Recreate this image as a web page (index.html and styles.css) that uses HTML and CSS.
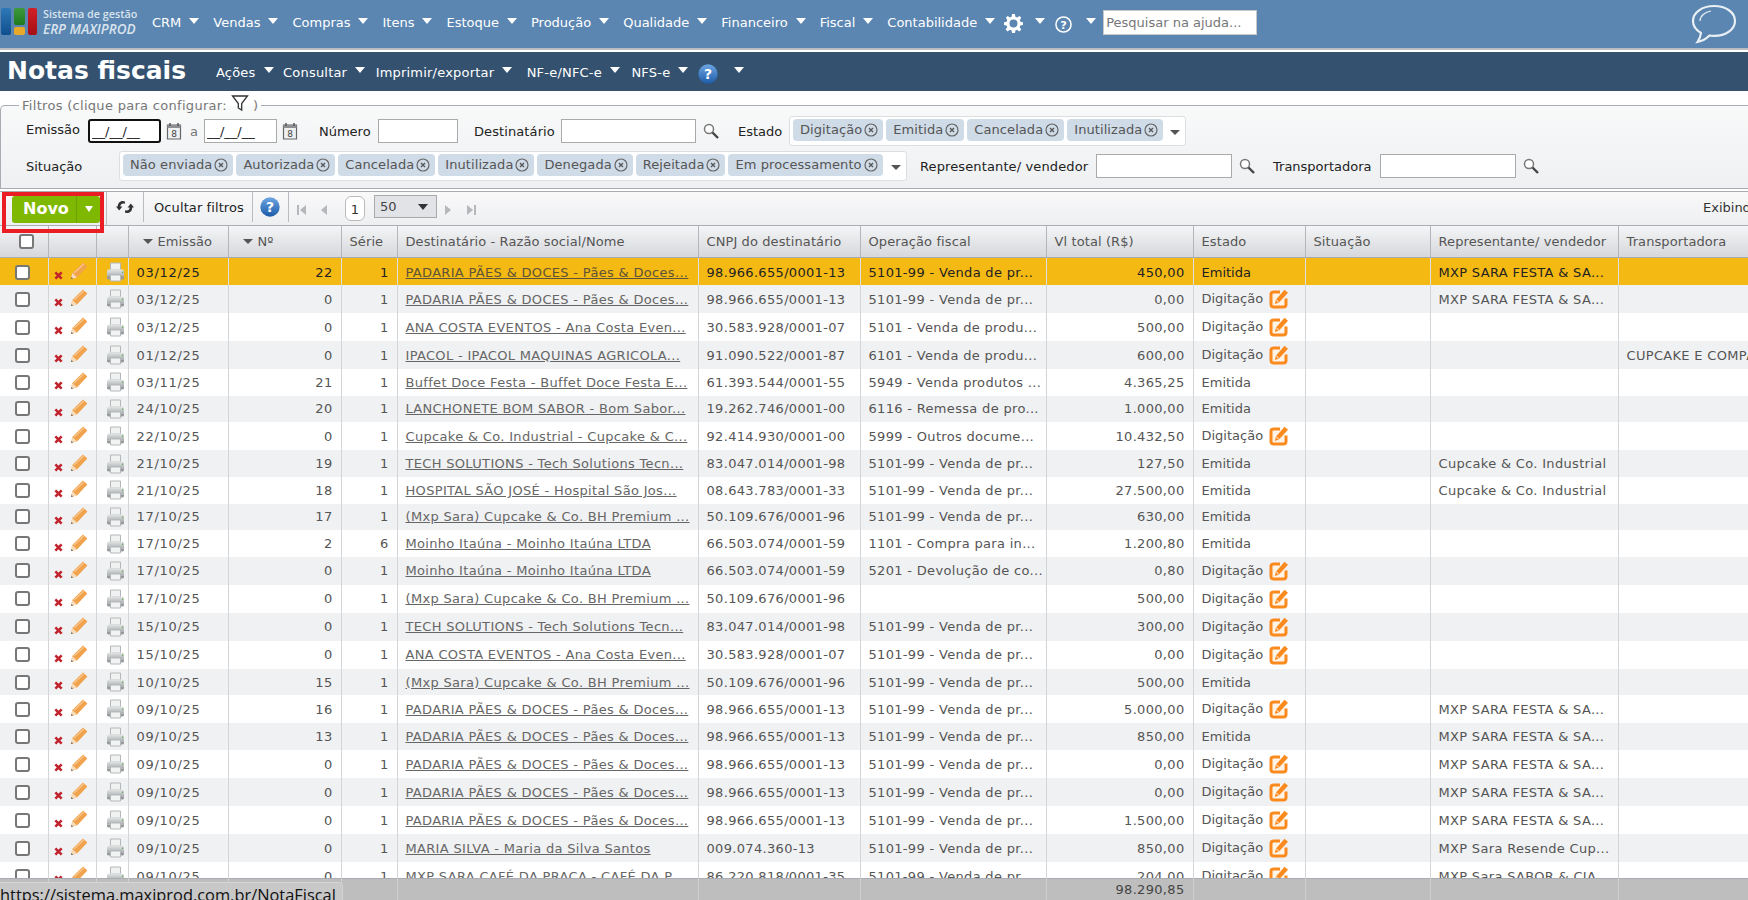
FILE: index.html
```html
<!DOCTYPE html>
<html lang="pt-BR">
<head>
<meta charset="utf-8">
<title>Notas fiscais</title>
<link rel="stylesheet" href="styles.css">
</head>
<body>
<svg class="sprite" aria-hidden="true">
  <defs>
    <linearGradient id="bluegrad" x1="0" y1="0" x2="0" y2="1"><stop offset="0" stop-color="#6ea6e2"/><stop offset="1" stop-color="#1c5ba8"/></linearGradient>
    <linearGradient id="prgrad" x1="0" y1="0" x2="0" y2="1"><stop offset="0" stop-color="#e4e6e7"/><stop offset="1" stop-color="#a9adae"/></linearGradient>
  </defs>
  <symbol id="i-x" viewBox="0 0 10 10"><path d="M1.500 1.500 8.500 8.500M8.500 1.500 1.500 8.500" stroke="#c0232c" stroke-width="2.800" fill="none"/></symbol>
  <symbol id="i-pencil" viewBox="0 0 18 18"><path d="M1 17 2.300 11 13 .6 17.400 4.400 7 15.500Z" fill="#f0a24d"/><path d="M2.300 11 7 15.500 1 17Z" fill="#f6dcb8"/><path d="M1 17 1.600 15 3 16.400Z" fill="#555"/><path d="M4 11 14 1.800" stroke="#f9c78c" stroke-width="1.200"/></symbol>
  <symbol id="i-print" viewBox="0 0 19 20"><path d="M4.500 1h10v7h-10z" fill="#f0f1f1" stroke="#b4b7b9"/><path d="M1 9.500Q1 7.500 3 7.500h13q2 0 2 2v5H1Z" fill="url(#prgrad)"/><path d="M1 14.500h17v1.500q0 1.500-2 1.500H3q-2 0-2-1.500Z" fill="#96999b"/><path d="M4.500 13h10v6h-10z" fill="#f2f3f3" stroke="#b4b7b9"/><path d="M16 9.500h1.200v1.500H16z" fill="#62b357"/></symbol>
  <symbol id="i-edit" viewBox="0 0 20 20"><path d="M11 3H4.500Q2 3 2 5.500v10Q2 18 4.500 18h10q2.500 0 2.500-2.500V9.500" fill="#fff4e6" stroke="#fb8a1e" stroke-width="3"/><path d="M15.500 .8 19 3.800 10 13.500 5.800 15 7 10.500Z" fill="#fb8a1e"/><path d="M7 10.500 10 13.500" stroke="#fff" stroke-width="1"/></symbol>
  <symbol id="i-close" viewBox="0 0 14 14"><circle cx="7" cy="7" r="6" fill="none" stroke="#666" stroke-width="1.200"/><path d="M5 5 9 9M9 5 5 9" stroke="#555" stroke-width="1.300"/></symbol>
  <symbol id="i-search" viewBox="0 0 16 16"><circle cx="6" cy="6" r="4.500" fill="#fff" stroke="#777" stroke-width="1.500"/><path d="M9.500 9.500 15 15" stroke="#444" stroke-width="2.400"/></symbol>
</svg>

<header class="topbar">
  <div class="logo">
    <div class="logo-bars">
      <span class="bar bar-blue"></span>
      <span class="bar-mid"><span class="bar bar-green"></span><span class="bar bar-yellow"></span></span>
      <span class="bar bar-red"></span>
    </div>
    <div class="logo-text">
      <span class="logo-top">Sistema de gestão</span>
      <span class="logo-erp">ERP MAXIPROD</span>
    </div>
  </div>
  <nav class="mainnav">
    <a class="item">CRM<i class="caret"></i></a>
    <a class="item">Vendas<i class="caret"></i></a>
    <a class="item">Compras<i class="caret"></i></a>
    <a class="item">Itens<i class="caret"></i></a>
    <a class="item">Estoque<i class="caret"></i></a>
    <a class="item">Produção<i class="caret"></i></a>
    <a class="item">Qualidade<i class="caret"></i></a>
    <a class="item">Financeiro<i class="caret"></i></a>
    <a class="item">Fiscal<i class="caret"></i></a>
    <a class="item">Contabilidade<i class="caret"></i></a>
  </nav>
  <svg class="gear" viewBox="0 0 20 20"><path fill="#fff" fill-rule="evenodd" d="M8.500 0h3l.5 2.800 1.800.8L16.200 2l2 2-1.600 2.400.8 1.800 2.600.5v3l-2.800.5-.7 1.700 1.700 2.400-2.100 2.100-2.400-1.700-1.700.7-.5 2.800h-3l-.5-2.800-1.800-.7L3.800 18.400 1.700 16.300l1.700-2.400-.7-1.700L0 11.700v-3l2.700-.5.8-1.800L1.900 4l2-2 2.400 1.600 1.700-.8ZM10 5.800a4.200 4.200 0 1 0 0 8.400 4.200 4.200 0 0 0 0-8.400Z"/></svg>
  <i class="caret caret-gear"></i>
  <svg class="qmark" viewBox="0 0 18 18"><circle cx="9" cy="9" r="8" fill="none" stroke="#fff" stroke-width="1.600"/><text x="9" y="13.500" text-anchor="middle" class="qtxt">?</text></svg>
  <i class="caret caret-help"></i>
  <input class="helpsearch" type="text" placeholder="Pesquisar na ajuda...">
  <svg class="chat" viewBox="0 0 46 40"><path d="M23 2C11 2 2 8.500 2 17c0 5 3 9 8 12-.3 3-1.500 6-3.500 9 5-1 9-3.500 12-6.500 1.500.3 3 .4 4.500.4 12 0 21-6.500 21-15S35 2 23 2Z" fill="none" stroke="#e9eff5" stroke-width="2.200"/><path d="M9 17c0-5 5-9 11-10" fill="none" stroke="#e9eff5" stroke-width="1.200"/></svg>
</header>

<section class="pagebar">
  <h1 class="title">Notas fiscais</h1>
  <nav class="subnav">
    <a class="item">Ações<i class="caret"></i></a>
    <a class="item">Consultar<i class="caret"></i></a>
    <a class="item">Imprimir/exportar<i class="caret"></i></a>
    <a class="item">NF-e/NFC-e<i class="caret"></i></a>
    <a class="item">NFS-e<i class="caret"></i></a>
  </nav>
  <svg class="ico-help-sub" viewBox="0 0 20 20"><circle cx="10" cy="10" r="9.700" fill="url(#bluegrad)"/><text x="10" y="15.200" text-anchor="middle" class="helptxt">?</text></svg>
  <i class="caret caret-sub"></i>
</section>

<fieldset class="filters">
  <legend class="legend">Filtros (clique para configurar: <svg class="funnel" viewBox="0 0 18 18"><path d="M1.500 2h15L10.700 9.500V16L7.300 14V9.500Z" fill="none" stroke="#333" stroke-width="1.300"/></svg> )</legend>
  <div class="frow frow-1">
    <label class="lab lab-emissao">Emissão</label>
    <input class="date date-focus" type="text" value="__/__/__">
    <svg class="ico-cal" viewBox="0 0 16 18"><path d="M1.500 3h13v14h-13z" fill="#eef0f1" stroke="#666" stroke-width="1.200"/><path d="M1.500 3h13v3h-13z" fill="#8c9094"/><path d="M4 1v3M12 1v3" stroke="#555" stroke-width="1.500"/><text x="8" y="15" text-anchor="middle" class="caltxt">8</text></svg>
    <span class="lab-a">a</span>
    <input class="date" type="text" value="__/__/__">
    <svg class="ico-cal" viewBox="0 0 16 18"><path d="M1.500 3h13v14h-13z" fill="#eef0f1" stroke="#666" stroke-width="1.200"/><path d="M1.500 3h13v3h-13z" fill="#8c9094"/><path d="M4 1v3M12 1v3" stroke="#555" stroke-width="1.500"/><text x="8" y="15" text-anchor="middle" class="caltxt">8</text></svg>
    <label class="lab lab-numero">Número</label>
    <input class="field field-num" type="text">
    <label class="lab lab-dest">Destinatário</label>
    <input class="field field-dest" type="text">
    <svg class="ico-search"><use href="#i-search"/></svg>
    <label class="lab lab-estado">Estado</label>
    <div class="multi multi-estado">
      <span class="tag">Digitação<svg class="tagx"><use href="#i-close"/></svg></span>
      <span class="tag">Emitida<svg class="tagx"><use href="#i-close"/></svg></span>
      <span class="tag">Cancelada<svg class="tagx"><use href="#i-close"/></svg></span>
      <span class="tag">Inutilizada<svg class="tagx"><use href="#i-close"/></svg></span>
      <i class="dcaret"></i>
    </div>
  </div>
  <div class="frow frow-2">
    <label class="lab lab-sit">Situação</label>
    <div class="multi multi-sit">
      <span class="tag">Não enviada<svg class="tagx"><use href="#i-close"/></svg></span>
      <span class="tag">Autorizada<svg class="tagx"><use href="#i-close"/></svg></span>
      <span class="tag">Cancelada<svg class="tagx"><use href="#i-close"/></svg></span>
      <span class="tag">Inutilizada<svg class="tagx"><use href="#i-close"/></svg></span>
      <span class="tag">Denegada<svg class="tagx"><use href="#i-close"/></svg></span>
      <span class="tag">Rejeitada<svg class="tagx"><use href="#i-close"/></svg></span>
      <span class="tag">Em processamento<svg class="tagx"><use href="#i-close"/></svg></span>
      <i class="dcaret"></i>
    </div>
    <label class="lab lab-rep">Representante/ vendedor</label>
    <input class="field field-rep" type="text">
    <svg class="ico-search"><use href="#i-search"/></svg>
    <label class="lab lab-tra">Transportadora</label>
    <input class="field field-rep" type="text">
    <svg class="ico-search"><use href="#i-search"/></svg>
  </div>
</fieldset>

<div class="toolbar">
  <div class="novo-wrap">
    <button class="novo"><span class="novo-label">Novo</span><span class="novo-arrow"></span></button>
  </div>
  <div class="tb-cell tb-refresh">
    <svg class="ico-refresh" viewBox="0 0 18 16"><path d="M9 2.500C5 .8 1.800 3.500 1.800 7.500H0l3.200 4 3.200-4H4.400C4.400 5 6.500 3.800 9 4.800ZM9 13.500c4 1.700 7.200-1 7.200-5H18l-3.200-4-3.200 4h2c0 2.500-2.100 3.700-4.600 2.700Z" fill="#333"/></svg>
  </div>
  <div class="tb-cell tb-hide">Ocultar filtros</div>
  <div class="tb-cell tb-help"><svg class="ico-help" viewBox="0 0 20 20"><circle cx="10" cy="10" r="9.700" fill="url(#bluegrad)"/><text x="10" y="15.200" text-anchor="middle" class="helptxt">?</text></svg></div>
  <div class="pager">
    <svg class="pg pg-first" viewBox="0 0 9 12"><path d="M0 1h2v10H0ZM9 1v10L3 6Z" fill="#b4b8bb"/></svg>
    <svg class="pg pg-prev" viewBox="0 0 6 12"><path d="M6 1v10L0 6Z" fill="#b4b8bb"/></svg>
    <span class="pagebox">1</span>
    <span class="pagesel">50<i class="dcaret dcaret-big"></i></span>
    <svg class="pg pg-next" viewBox="0 0 6 12"><path d="M0 1v10l6-5Z" fill="#b4b8bb"/></svg>
    <svg class="pg pg-last" viewBox="0 0 9 12"><path d="M0 1v10l6-5ZM7 1h2v10H7Z" fill="#b4b8bb"/></svg>
  </div>
  <div class="showing">Exibindo 1 - 50 de 320</div>
</div>
<div class="redbox"></div>

<div class="grid-wrap">
<table class="grid">
  <colgroup>
    <col class="c-chk"><col class="c-act"><col class="c-prt"><col class="c-em"><col class="c-num"><col class="c-ser"><col class="c-dest"><col class="c-cnpj"><col class="c-op"><col class="c-val"><col class="c-est"><col class="c-sit"><col class="c-rep"><col class="c-tra">
  </colgroup>
  <thead>
    <tr>
      <th class="ctr"><input class="chk chk-head" type="checkbox"></th><th></th><th></th>
      <th class="sorted"><i class="dcaret"></i>Emissão</th>
      <th class="sorted"><i class="dcaret"></i>Nº</th>
      <th>Série</th><th>Destinatário - Razão social/Nome</th><th>CNPJ do destinatário</th><th>Operação fiscal</th><th>Vl total (R$)</th><th>Estado</th><th>Situação</th><th>Representante/ vendedor</th><th>Transportadora</th>
    </tr>
  </thead>
  <tbody>
    <tr class="sel"><td class="ctr"><input class="chk" type="checkbox"></td><td class="acts"><svg class="ico-x"><use href="#i-x"/></svg><svg class="ico-pencil"><use href="#i-pencil"/></svg></td><td class="ctr"><svg class="ico-print"><use href="#i-print"/></svg></td><td>03/12/25</td><td class="r">22</td><td class="r">1</td><td><a>PADARIA PÃES &amp; DOCES - Pães &amp; Doces...</a></td><td>98.966.655/0001-13</td><td>5101-99 - Venda de pr...</td><td class="r">450,00</td><td>Emitida</td><td></td><td>MXP SARA FESTA &amp; SA...</td><td></td></tr>
    <tr class="tall"><td class="ctr"><input class="chk" type="checkbox"></td><td class="acts"><svg class="ico-x"><use href="#i-x"/></svg><svg class="ico-pencil"><use href="#i-pencil"/></svg></td><td class="ctr"><svg class="ico-print"><use href="#i-print"/></svg></td><td>03/12/25</td><td class="r">0</td><td class="r">1</td><td><a>PADARIA PÃES &amp; DOCES - Pães &amp; Doces...</a></td><td>98.966.655/0001-13</td><td>5101-99 - Venda de pr...</td><td class="r">0,00</td><td>Digitação<svg class="ico-edit"><use href="#i-edit"/></svg></td><td></td><td>MXP SARA FESTA &amp; SA...</td><td></td></tr>
    <tr class="tall"><td class="ctr"><input class="chk" type="checkbox"></td><td class="acts"><svg class="ico-x"><use href="#i-x"/></svg><svg class="ico-pencil"><use href="#i-pencil"/></svg></td><td class="ctr"><svg class="ico-print"><use href="#i-print"/></svg></td><td>03/12/25</td><td class="r">0</td><td class="r">1</td><td><a>ANA COSTA EVENTOS - Ana Costa Even...</a></td><td>30.583.928/0001-07</td><td>5101 - Venda de produ...</td><td class="r">500,00</td><td>Digitação<svg class="ico-edit"><use href="#i-edit"/></svg></td><td></td><td></td><td></td></tr>
    <tr class="tall"><td class="ctr"><input class="chk" type="checkbox"></td><td class="acts"><svg class="ico-x"><use href="#i-x"/></svg><svg class="ico-pencil"><use href="#i-pencil"/></svg></td><td class="ctr"><svg class="ico-print"><use href="#i-print"/></svg></td><td>01/12/25</td><td class="r">0</td><td class="r">1</td><td><a>IPACOL - IPACOL MAQUINAS AGRICOLA...</a></td><td>91.090.522/0001-87</td><td>6101 - Venda de produ...</td><td class="r">600,00</td><td>Digitação<svg class="ico-edit"><use href="#i-edit"/></svg></td><td></td><td></td><td>CUPCAKE E COMPANHIA</td></tr>
    <tr><td class="ctr"><input class="chk" type="checkbox"></td><td class="acts"><svg class="ico-x"><use href="#i-x"/></svg><svg class="ico-pencil"><use href="#i-pencil"/></svg></td><td class="ctr"><svg class="ico-print"><use href="#i-print"/></svg></td><td>03/11/25</td><td class="r">21</td><td class="r">1</td><td><a>Buffet Doce Festa - Buffet Doce Festa E...</a></td><td>61.393.544/0001-55</td><td>5949 - Venda produtos ...</td><td class="r">4.365,25</td><td>Emitida</td><td></td><td></td><td></td></tr>
    <tr><td class="ctr"><input class="chk" type="checkbox"></td><td class="acts"><svg class="ico-x"><use href="#i-x"/></svg><svg class="ico-pencil"><use href="#i-pencil"/></svg></td><td class="ctr"><svg class="ico-print"><use href="#i-print"/></svg></td><td>24/10/25</td><td class="r">20</td><td class="r">1</td><td><a>LANCHONETE BOM SABOR - Bom Sabor...</a></td><td>19.262.746/0001-00</td><td>6116 - Remessa de pro...</td><td class="r">1.000,00</td><td>Emitida</td><td></td><td></td><td></td></tr>
    <tr class="tall"><td class="ctr"><input class="chk" type="checkbox"></td><td class="acts"><svg class="ico-x"><use href="#i-x"/></svg><svg class="ico-pencil"><use href="#i-pencil"/></svg></td><td class="ctr"><svg class="ico-print"><use href="#i-print"/></svg></td><td>22/10/25</td><td class="r">0</td><td class="r">1</td><td><a>Cupcake &amp; Co. Industrial - Cupcake &amp; C...</a></td><td>92.414.930/0001-00</td><td>5999 - Outros docume...</td><td class="r">10.432,50</td><td>Digitação<svg class="ico-edit"><use href="#i-edit"/></svg></td><td></td><td></td><td></td></tr>
    <tr><td class="ctr"><input class="chk" type="checkbox"></td><td class="acts"><svg class="ico-x"><use href="#i-x"/></svg><svg class="ico-pencil"><use href="#i-pencil"/></svg></td><td class="ctr"><svg class="ico-print"><use href="#i-print"/></svg></td><td>21/10/25</td><td class="r">19</td><td class="r">1</td><td><a>TECH SOLUTIONS - Tech Solutions Tecn...</a></td><td>83.047.014/0001-98</td><td>5101-99 - Venda de pr...</td><td class="r">127,50</td><td>Emitida</td><td></td><td>Cupcake &amp; Co. Industrial</td><td></td></tr>
    <tr><td class="ctr"><input class="chk" type="checkbox"></td><td class="acts"><svg class="ico-x"><use href="#i-x"/></svg><svg class="ico-pencil"><use href="#i-pencil"/></svg></td><td class="ctr"><svg class="ico-print"><use href="#i-print"/></svg></td><td>21/10/25</td><td class="r">18</td><td class="r">1</td><td><a>HOSPITAL SÃO JOSÉ - Hospital São Jos...</a></td><td>08.643.783/0001-33</td><td>5101-99 - Venda de pr...</td><td class="r">27.500,00</td><td>Emitida</td><td></td><td>Cupcake &amp; Co. Industrial</td><td></td></tr>
    <tr><td class="ctr"><input class="chk" type="checkbox"></td><td class="acts"><svg class="ico-x"><use href="#i-x"/></svg><svg class="ico-pencil"><use href="#i-pencil"/></svg></td><td class="ctr"><svg class="ico-print"><use href="#i-print"/></svg></td><td>17/10/25</td><td class="r">17</td><td class="r">1</td><td><a>(Mxp Sara) Cupcake &amp; Co. BH Premium ...</a></td><td>50.109.676/0001-96</td><td>5101-99 - Venda de pr...</td><td class="r">630,00</td><td>Emitida</td><td></td><td></td><td></td></tr>
    <tr><td class="ctr"><input class="chk" type="checkbox"></td><td class="acts"><svg class="ico-x"><use href="#i-x"/></svg><svg class="ico-pencil"><use href="#i-pencil"/></svg></td><td class="ctr"><svg class="ico-print"><use href="#i-print"/></svg></td><td>17/10/25</td><td class="r">2</td><td class="r">6</td><td><a>Moinho Itaúna - Moinho Itaúna LTDA</a></td><td>66.503.074/0001-59</td><td>1101 - Compra para in...</td><td class="r">1.200,80</td><td>Emitida</td><td></td><td></td><td></td></tr>
    <tr class="tall"><td class="ctr"><input class="chk" type="checkbox"></td><td class="acts"><svg class="ico-x"><use href="#i-x"/></svg><svg class="ico-pencil"><use href="#i-pencil"/></svg></td><td class="ctr"><svg class="ico-print"><use href="#i-print"/></svg></td><td>17/10/25</td><td class="r">0</td><td class="r">1</td><td><a>Moinho Itaúna - Moinho Itaúna LTDA</a></td><td>66.503.074/0001-59</td><td>5201 - Devolução de co...</td><td class="r">0,80</td><td>Digitação<svg class="ico-edit"><use href="#i-edit"/></svg></td><td></td><td></td><td></td></tr>
    <tr class="tall"><td class="ctr"><input class="chk" type="checkbox"></td><td class="acts"><svg class="ico-x"><use href="#i-x"/></svg><svg class="ico-pencil"><use href="#i-pencil"/></svg></td><td class="ctr"><svg class="ico-print"><use href="#i-print"/></svg></td><td>17/10/25</td><td class="r">0</td><td class="r">1</td><td><a>(Mxp Sara) Cupcake &amp; Co. BH Premium ...</a></td><td>50.109.676/0001-96</td><td></td><td class="r">500,00</td><td>Digitação<svg class="ico-edit"><use href="#i-edit"/></svg></td><td></td><td></td><td></td></tr>
    <tr class="tall"><td class="ctr"><input class="chk" type="checkbox"></td><td class="acts"><svg class="ico-x"><use href="#i-x"/></svg><svg class="ico-pencil"><use href="#i-pencil"/></svg></td><td class="ctr"><svg class="ico-print"><use href="#i-print"/></svg></td><td>15/10/25</td><td class="r">0</td><td class="r">1</td><td><a>TECH SOLUTIONS - Tech Solutions Tecn...</a></td><td>83.047.014/0001-98</td><td>5101-99 - Venda de pr...</td><td class="r">300,00</td><td>Digitação<svg class="ico-edit"><use href="#i-edit"/></svg></td><td></td><td></td><td></td></tr>
    <tr class="tall"><td class="ctr"><input class="chk" type="checkbox"></td><td class="acts"><svg class="ico-x"><use href="#i-x"/></svg><svg class="ico-pencil"><use href="#i-pencil"/></svg></td><td class="ctr"><svg class="ico-print"><use href="#i-print"/></svg></td><td>15/10/25</td><td class="r">0</td><td class="r">1</td><td><a>ANA COSTA EVENTOS - Ana Costa Even...</a></td><td>30.583.928/0001-07</td><td>5101-99 - Venda de pr...</td><td class="r">0,00</td><td>Digitação<svg class="ico-edit"><use href="#i-edit"/></svg></td><td></td><td></td><td></td></tr>
    <tr><td class="ctr"><input class="chk" type="checkbox"></td><td class="acts"><svg class="ico-x"><use href="#i-x"/></svg><svg class="ico-pencil"><use href="#i-pencil"/></svg></td><td class="ctr"><svg class="ico-print"><use href="#i-print"/></svg></td><td>10/10/25</td><td class="r">15</td><td class="r">1</td><td><a>(Mxp Sara) Cupcake &amp; Co. BH Premium ...</a></td><td>50.109.676/0001-96</td><td>5101-99 - Venda de pr...</td><td class="r">500,00</td><td>Emitida</td><td></td><td></td><td></td></tr>
    <tr class="tall"><td class="ctr"><input class="chk" type="checkbox"></td><td class="acts"><svg class="ico-x"><use href="#i-x"/></svg><svg class="ico-pencil"><use href="#i-pencil"/></svg></td><td class="ctr"><svg class="ico-print"><use href="#i-print"/></svg></td><td>09/10/25</td><td class="r">16</td><td class="r">1</td><td><a>PADARIA PÃES &amp; DOCES - Pães &amp; Doces...</a></td><td>98.966.655/0001-13</td><td>5101-99 - Venda de pr...</td><td class="r">5.000,00</td><td>Digitação<svg class="ico-edit"><use href="#i-edit"/></svg></td><td></td><td>MXP SARA FESTA &amp; SA...</td><td></td></tr>
    <tr><td class="ctr"><input class="chk" type="checkbox"></td><td class="acts"><svg class="ico-x"><use href="#i-x"/></svg><svg class="ico-pencil"><use href="#i-pencil"/></svg></td><td class="ctr"><svg class="ico-print"><use href="#i-print"/></svg></td><td>09/10/25</td><td class="r">13</td><td class="r">1</td><td><a>PADARIA PÃES &amp; DOCES - Pães &amp; Doces...</a></td><td>98.966.655/0001-13</td><td>5101-99 - Venda de pr...</td><td class="r">850,00</td><td>Emitida</td><td></td><td>MXP SARA FESTA &amp; SA...</td><td></td></tr>
    <tr class="tall"><td class="ctr"><input class="chk" type="checkbox"></td><td class="acts"><svg class="ico-x"><use href="#i-x"/></svg><svg class="ico-pencil"><use href="#i-pencil"/></svg></td><td class="ctr"><svg class="ico-print"><use href="#i-print"/></svg></td><td>09/10/25</td><td class="r">0</td><td class="r">1</td><td><a>PADARIA PÃES &amp; DOCES - Pães &amp; Doces...</a></td><td>98.966.655/0001-13</td><td>5101-99 - Venda de pr...</td><td class="r">0,00</td><td>Digitação<svg class="ico-edit"><use href="#i-edit"/></svg></td><td></td><td>MXP SARA FESTA &amp; SA...</td><td></td></tr>
    <tr class="tall"><td class="ctr"><input class="chk" type="checkbox"></td><td class="acts"><svg class="ico-x"><use href="#i-x"/></svg><svg class="ico-pencil"><use href="#i-pencil"/></svg></td><td class="ctr"><svg class="ico-print"><use href="#i-print"/></svg></td><td>09/10/25</td><td class="r">0</td><td class="r">1</td><td><a>PADARIA PÃES &amp; DOCES - Pães &amp; Doces...</a></td><td>98.966.655/0001-13</td><td>5101-99 - Venda de pr...</td><td class="r">0,00</td><td>Digitação<svg class="ico-edit"><use href="#i-edit"/></svg></td><td></td><td>MXP SARA FESTA &amp; SA...</td><td></td></tr>
    <tr class="tall"><td class="ctr"><input class="chk" type="checkbox"></td><td class="acts"><svg class="ico-x"><use href="#i-x"/></svg><svg class="ico-pencil"><use href="#i-pencil"/></svg></td><td class="ctr"><svg class="ico-print"><use href="#i-print"/></svg></td><td>09/10/25</td><td class="r">0</td><td class="r">1</td><td><a>PADARIA PÃES &amp; DOCES - Pães &amp; Doces...</a></td><td>98.966.655/0001-13</td><td>5101-99 - Venda de pr...</td><td class="r">1.500,00</td><td>Digitação<svg class="ico-edit"><use href="#i-edit"/></svg></td><td></td><td>MXP SARA FESTA &amp; SA...</td><td></td></tr>
    <tr class="tall"><td class="ctr"><input class="chk" type="checkbox"></td><td class="acts"><svg class="ico-x"><use href="#i-x"/></svg><svg class="ico-pencil"><use href="#i-pencil"/></svg></td><td class="ctr"><svg class="ico-print"><use href="#i-print"/></svg></td><td>09/10/25</td><td class="r">0</td><td class="r">1</td><td><a>MARIA SILVA - Maria da Silva Santos</a></td><td>009.074.360-13</td><td>5101-99 - Venda de pr...</td><td class="r">850,00</td><td>Digitação<svg class="ico-edit"><use href="#i-edit"/></svg></td><td></td><td>MXP Sara Resende Cup...</td><td></td></tr>
    <tr class="tall"><td class="ctr"><input class="chk" type="checkbox"></td><td class="acts"><svg class="ico-x"><use href="#i-x"/></svg><svg class="ico-pencil"><use href="#i-pencil"/></svg></td><td class="ctr"><svg class="ico-print"><use href="#i-print"/></svg></td><td>09/10/25</td><td class="r">0</td><td class="r">1</td><td><a>MXP SARA CAFÉ DA PRAÇA - CAFÉ DA P...</a></td><td>86.220.818/0001-35</td><td>5101-99 - Venda de pr...</td><td class="r">204,00</td><td>Digitação<svg class="ico-edit"><use href="#i-edit"/></svg></td><td></td><td>MXP Sara SABOR &amp; CIA</td><td></td></tr>
  </tbody>
</table>
</div>

<table class="grid grid-foot">
  <colgroup>
    <col class="c-chk"><col class="c-act"><col class="c-prt"><col class="c-em"><col class="c-num"><col class="c-ser"><col class="c-dest"><col class="c-cnpj"><col class="c-op"><col class="c-val"><col class="c-est"><col class="c-sit"><col class="c-rep"><col class="c-tra">
  </colgroup>
  <tfoot>
    <tr><td></td><td></td><td></td><td></td><td></td><td></td><td></td><td></td><td></td><td class="r">98.290,85</td><td></td><td></td><td></td><td></td></tr>
  </tfoot>
</table>

<div class="statusurl">https://sistema.maxiprod.com.br/NotaFiscal</div>
</body>
</html>
```
FILE: styles.css
```css
* { box-sizing: border-box; }
html, body { margin: 0; padding: 0; }
body {
  width: 1748px; height: 900px; overflow: hidden;
  display: flex; flex-direction: column; position: relative;
  font-family: "DejaVu Sans", Verdana, sans-serif; font-size: 13px; color: #555; background: #fff;
}
.sprite { position: absolute; width: 0; height: 0; }
.caltxt { font: 9px "DejaVu Sans", sans-serif; fill: #444; }
.helptxt { font: bold 14px "DejaVu Sans", sans-serif; fill: #fff; }
.qtxt { font: bold 12px "DejaVu Sans", sans-serif; fill: #fff; }

/* top bar */
.topbar {
  flex: none; display: flex; align-items: flex-start;
  background: #5b86b2; border-bottom: 2px solid #b9bcc0;
  height: 50px; margin-bottom: 2px; position: relative;
}
.logo { width: 152px; display: flex; flex: none; padding: 8px 0 0 1px; }
.logo-bars { display: flex; gap: 2px; height: 27px; width: 36px; flex: none; }
.bar { display: block; border-radius: 2px; }
.bar-blue { width: 11px; height: 27px; background: linear-gradient(#2f78b8, #0f4f8e); }
.bar-mid { width: 11px; display: flex; flex-direction: column; gap: 2px; margin: 0 1px; }
.bar-green { height: 17px; background: linear-gradient(#3d9a3a, #1f7a1f); }
.bar-yellow { height: 8px; background: #e7a92a; }
.bar-red { width: 10px; height: 27px; background: linear-gradient(#d21f26, #a50f14); }
.logo-text { margin-left: 6px; display: flex; flex-direction: column; color: #d9e3ec; white-space: nowrap; font-family: "Open Sans", sans-serif; font-weight: 600; }
.logo-top { font-size: 10.800px; line-height: 13px; margin-top: -1px; }
.logo-erp { font-size: 13.500px; line-height: 17px; font-style: italic; margin-top: 1px; }
.mainnav, .subnav { display: flex; flex: none; }
.item { display: flex; align-items: flex-start; color: #fff; white-space: nowrap; }
.caret {
  display: block; width: 0; height: 0; flex: none;
  border-left: 5px solid transparent; border-right: 5px solid transparent; border-top: 6px solid #fff;
}
.mainnav { padding-top: 15px; line-height: 16px; }
.mainnav .item { margin-right: 14px; }
.mainnav .caret { margin: 3px 0 0 8px; }
.gear { width: 19px; height: 19px; margin: 14px 0 0 -5px; flex: none; }
.caret-gear { margin: 18px 0 0 12px; }
.qmark { width: 17px; height: 17px; margin: 16px 0 0 10px; flex: none; }
.caret-help { margin: 18px 0 0 14px; }
.helpsearch {
  width: 154px; height: 25px; margin: 10px 0 0 7px; flex: none; padding: 0 2px;
  border: 1px solid #c8c8c8; background: #fff; font: 13px "DejaVu Sans", sans-serif; color: #777;
}
.helpsearch::placeholder { color: #777; opacity: 1; }
.chat { width: 46px; height: 40px; margin: 4px 11px 0 auto; flex: none; }

/* page bar */
.pagebar { flex: none; height: 39px; background: #34526f; display: flex; align-items: flex-start; }
.title { margin: 0; padding-left: 7px; width: 216px; flex: none; font-size: 25px; line-height: 37px; font-weight: 700; color: #fff; white-space: nowrap; font-family: "DejaVu Sans", sans-serif; }
.subnav { padding-top: 13px; line-height: 16px; letter-spacing: .2px; }
.subnav .item { margin-right: 11.500px; }
.subnav .item:nth-child(1) { margin-right: 9.500px; }
.subnav .item:nth-child(2) { margin-right: 10.500px; }
.subnav .item:nth-child(3) { margin-right: 14.500px; }
.subnav .caret { margin: 2px 0 0 8px; }
.ico-help-sub { width: 20px; height: 20px; margin: 12px 0 0 -2px; flex: none; }
.caret-sub { margin: 15px 0 0 16px; }

/* filters */
.filters {
  flex: none; margin: 5px 0 0; padding: 0; height: 93px; min-width: 0;
  border: 0; border-top: 1px solid #a9adb3; border-left: 1px solid #a9adb3; border-bottom: 1px solid #a9adb3;
  border-top-left-radius: 5px; background: linear-gradient(#f8f9f9, #eff0f2);
}
.legend { margin-left: 18px; padding: 2px 3px 0; height: 18px; line-height: 18px; color: #777; font-size: 13px; letter-spacing: .3px; white-space: nowrap; display: flex; align-items: center; gap: 4px; }
.funnel { width: 18px; height: 18px; margin-top: -6px; }
.frow { display: flex; align-items: center; }
.frow-1 { height: 30px; margin-top: 2px; }
.frow-2 { height: 30px; margin-top: 5px; }
.lab { color: #222; white-space: nowrap; flex: none; }
.lab-emissao { margin: -3px 0 0 25px; width: 62px; }
.date { width: 73px; height: 24px; padding: 0 2px; border: 1px solid #aaa; background: #fff; font: 13px "DejaVu Sans", sans-serif; color: #222; flex: none; }
.date-focus { border: 2px solid #111; border-radius: 3px; }
.ico-cal { width: 16px; height: 18px; margin-left: 5px; flex: none; }
.lab-a { margin: 0 6px 0 8px; color: #777; }
.lab-numero { margin-left: 21px; width: 59px; }
.field { height: 24px; border: 1px solid #aaa; background: #fff; flex: none; }
.field-num { width: 80px; }
.lab-dest { margin-left: 16px; width: 87px; letter-spacing: .1px; }
.field-dest { width: 135px; }
.ico-search { width: 16px; height: 16px; margin-left: 7px; flex: none; }
.lab-estado { margin-left: 19px; width: 51px; }
.multi { display: flex; align-items: center; gap: 3px; padding: 0 3px; background: #fff; border: 1px solid #dcdee1; border-radius: 3px; flex: none; position: relative; }
.multi-estado { width: 397px; height: 30px; }
.multi-sit { width: 788px; height: 30px; }
.tag { display: flex; align-items: center; height: 22px; padding: 0 5px 0 7px; background: #cfdbe7; border-radius: 4px; color: #555; letter-spacing: .08px; white-space: nowrap; flex: none; margin-top: -3px; }
.tagx { width: 14px; height: 14px; margin-left: 2px; flex: none; }
.dcaret { display: inline-block; width: 0; height: 0; border-left: 5px solid transparent; border-right: 5px solid transparent; border-top: 5px solid #555; flex: none; }
.multi .dcaret { margin: 2px 2px 0 auto; }
.lab-sit { margin-left: 25px; width: 93px; }
.lab-rep { margin-left: 13px; width: 176px; letter-spacing: .12px; }
.field-rep { width: 136px; }
.lab-tra { margin-left: 18px; width: 107px; }

/* toolbar */
.toolbar { flex: none; margin-top: 2px; height: 35px; display: flex; align-items: stretch; border-top: 1px solid #a9adb3; border-bottom: 1px solid #a9adb3; background: linear-gradient(#f9f9fa, #eeeff1); white-space: nowrap; position: relative; overflow: hidden; }
.novo-wrap { width: 107px; flex: none; padding: 4px 0 0 12px; border-right: 1px solid #b9bcc0; }
.novo { width: 88px; height: 27px; padding: 0; border: 0; border-radius: 3px; background: #7fb800; display: flex; color: #fff; font: 700 16px "DejaVu Sans", sans-serif; }
.novo-label { width: 64px; line-height: 26px; padding-left: 11px; text-align: left; }
.novo-arrow { flex: 1; border-left: 1px solid #6e9f05; position: relative; }
.novo-arrow::after { content: ""; position: absolute; left: 8px; top: 10px; border-left: 4px solid transparent; border-right: 4px solid transparent; border-top: 6px solid #fff; }
.tb-cell { display: flex; align-items: center; flex: none; color: #222; border-right: 1px solid #b9bcc0; margin-bottom: 3px; }
.tb-refresh { width: 37px; justify-content: center; }
.ico-refresh { width: 18px; height: 16px; }
.tb-hide { width: 109px; padding-left: 10px; letter-spacing: .1px; }
.tb-help { width: 36px; padding-left: 7px; }
.ico-help { width: 20px; height: 20px; }
.pager { display: flex; align-items: flex-start; flex: none; }
.pg { flex: none; height: 12px; margin-top: 12px; }
.pg-first { width: 9px; margin-left: 8px; }
.pg-prev { width: 6px; margin-left: 15px; }
.pagebox { width: 20px; height: 25px; margin: 4px 0 0 18px; border: 1px solid #bbb; border-radius: 6px; background: #fff; text-align: center; line-height: 25px; color: #333; }
.pagesel { display: flex; align-items: center; justify-content: space-between; width: 63px; height: 23px; margin: 3px 0 0 9px; padding: 0 8px 0 5px; border: 1px solid #aaa; background: #e1e3e6; color: #444; }
.dcaret-big { border-left-width: 5px; border-right-width: 5px; border-top: 6px solid #333; }
.pg-next { width: 6px; margin-left: 8px; }
.pg-last { width: 9px; margin-left: 16px; }
.showing { margin-left: 1227px; padding-top: 8px; color: #333; flex: none; }

.redbox { position: absolute; left: 2px; top: 192px; width: 102px; height: 41px; border: 4px solid #ea1c24; pointer-events: none; }

/* grid */
.grid-wrap { flex: 1; min-height: 0; overflow: hidden; }
.grid { width: 1818px; table-layout: fixed; border-collapse: collapse; }
.c-chk, .c-act { width: 48px; }
.c-prt { width: 32px; }
.c-em { width: 100px; }
.c-num { width: 113px; }
.c-ser { width: 56px; }
.c-dest { width: 301px; }
.c-cnpj { width: 162px; }
.c-op { width: 186px; }
.c-val { width: 147px; }
.c-est { width: 112px; }
.c-sit { width: 125px; }
.c-rep { width: 188px; }
.c-tra { width: 200px; }
th { height: 31px; padding: 0 8px; font-weight: 400; text-align: left; color: #555; letter-spacing: .1px; white-space: nowrap; overflow: hidden; background: linear-gradient(#f4f5f6, #d5d7db); border-right: 1px solid #b3b7bc; border-bottom: 1px solid #a9adb3; }
th.sorted { padding-left: 14px; }
th .dcaret { margin-right: 5px; vertical-align: 2px; }
td { height: 26.650px; padding: 0 8px; white-space: nowrap; overflow: hidden; border-right: 1px solid #d3d5d8; color: #555; letter-spacing: .32px; }
td:nth-child(4) { letter-spacing: .7px; }
td:nth-child(11) { letter-spacing: 0; }
tr.tall td, tr.sel td { height: 28px; }
tbody tr:nth-child(even) td { background: #f0f1f3; }
tbody tr.sel td { background: #f5b914; color: #222; border-right-color: #dce0e4; padding-top: 2px; }
td a { color: #666; text-decoration: underline; }
.sel td a { color: #5d5338; }
.r { text-align: right; }
.ctr { text-align: center; padding: 0; }
.acts { padding: 0 0 0 5px; }
.chk { appearance: none; -webkit-appearance: none; display: block; width: 15px; height: 15px; margin: 0 0 0 15px; border: 2px solid #777; border-radius: 3px; background: #fff; }
.chk-head { margin-left: 19px; }
.ico-x { width: 9px; height: 9px; vertical-align: -1px; }
.ico-pencil { width: 18px; height: 18px; margin-left: 7px; vertical-align: -1px; }
.ico-print { width: 19px; height: 20px; display: block; margin: 0 0 0 9px; }
.ico-edit { width: 20px; height: 20px; margin-left: 6px; vertical-align: -6px; }

.grid-foot { flex: none; height: 22px; border-top: 1px solid #a9adb3; }
.grid-foot td { height: 21px; background: #bebebe; border-right: 1px solid #cfcfcf; color: #444; }

.statusurl { position: absolute; left: 0; bottom: -12px; width: 343px; height: 30px; padding: 1px 0 0; background: #c8c8c8; border: 1px solid #d5d5d5; border-left: 0; border-top-right-radius: 5px; font: 16.400px/22px "Open Sans", sans-serif; color: #111; white-space: nowrap; overflow: hidden; }
```
